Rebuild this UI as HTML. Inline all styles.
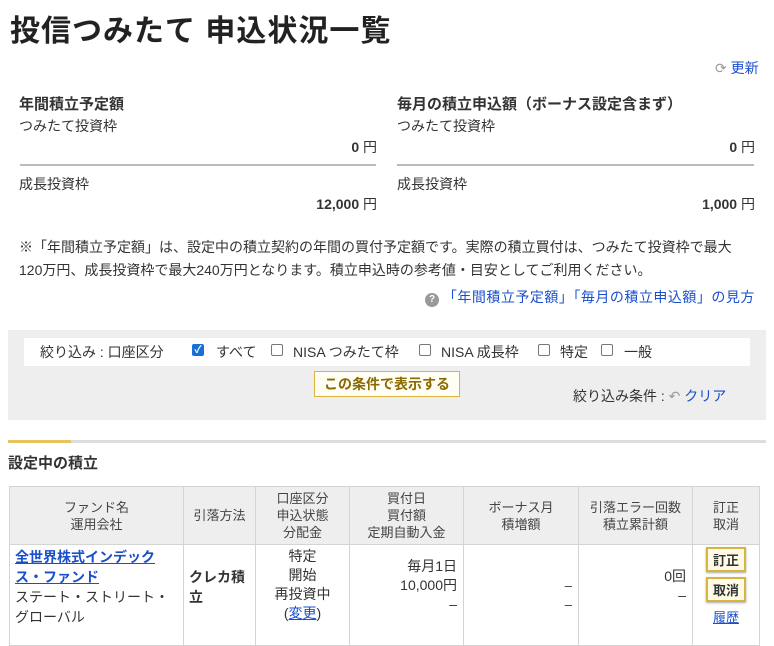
<!DOCTYPE html>
<html><head><meta charset="utf-8"><style>
*{box-sizing:border-box;margin:0;padding:0}
body{width:774px;height:631px;overflow:hidden;background:#fff;font-family:"Liberation Sans","Noto Sans CJK JP",sans-serif;color:#333;font-size:14px;position:relative}
.a{position:absolute;white-space:nowrap}
a,.lk{color:#1a4fcc}
.b{font-weight:bold}
.hr{position:absolute;height:2px;background:#bbb}
table{position:absolute;left:9px;top:486px;border-collapse:collapse;font-size:13px}
td,th{border:1px solid #d4d4d4;vertical-align:top}
th{background:#eee;font-weight:normal;vertical-align:middle;text-align:center;line-height:17px;color:#444}
.btn{display:inline-block;border:2px solid #d9b540;background:#fffbe6;color:#333;font-weight:bold;padding:1px 5px;font-size:13px;box-shadow:0 1px 2px #aaa;margin-bottom:5px}
.cb{position:absolute;top:344px;width:12px;height:12px;border:1px solid #777;border-radius:2px;background:#fff}
.cb.on{background:#1a6fd6;border-color:#1a6fd6;color:#fff;font-size:10px;line-height:11px;text-align:center;font-weight:bold}
</style></head><body>
<div class="a b" style="left:10px;top:6px;font-size:30px;letter-spacing:1px;color:#222">投信つみたて 申込状況一覧</div>
<div class="a" style="left:715px;top:58px;font-size:14px"><span style="color:#999">⟳</span> <span class="lk">更新</span></div>

<div class="a b" style="left:19px;top:93px;font-size:15px">年間積立予定額</div>
<div class="a" style="left:19px;top:116px">つみたて投資枠</div>
<div class="a" style="right:397px;top:137px;font-size:14px"><b>0</b> 円</div>
<div class="hr" style="left:20px;width:356px;top:164px"></div>
<div class="a" style="left:19px;top:174px">成長投資枠</div>
<div class="a" style="right:397px;top:194px"><b>12,000</b> 円</div>

<div class="a b" style="left:397px;top:93px;font-size:15px">毎月の積立申込額（ボーナス設定含まず）</div>
<div class="a" style="left:397px;top:116px">つみたて投資枠</div>
<div class="a" style="right:19px;top:137px"><b>0</b> 円</div>
<div class="hr" style="left:397px;width:357px;top:164px"></div>
<div class="a" style="left:397px;top:174px">成長投資枠</div>
<div class="a" style="right:19px;top:194px"><b>1,000</b> 円</div>

<div class="a" style="left:19px;top:236px;line-height:23px">※「年間積立予定額」は、設定中の積立契約の年間の買付予定額です。実際の積立買付は、つみたて投資枠で最大<br>120万円、成長投資枠で最大240万円となります。積立申込時の参考値・目安としてご利用ください。</div>
<div class="a" style="left:425px;top:287px"><span style="display:inline-block;width:14px;height:14px;border-radius:50%;background:#999;color:#fff;font-size:10px;text-align:center;line-height:14px;font-weight:bold">?</span> <span class="lk" style="letter-spacing:0.5px">「年間積立予定額」「毎月の積立申込額」の見方</span></div>

<div class="a" style="left:8px;top:330px;width:758px;height:90px;background:#eee"></div>
<div class="a" style="left:24px;top:338px;width:726px;height:28px;background:#fff"></div>
<div class="a" style="left:40px;top:342px">絞り込み : 口座区分</div>
<div class="cb on" style="left:192px">✓</div><div class="a" style="left:216px;top:342px">すべて</div>
<div class="cb" style="left:271px"></div><div class="a" style="left:293px;top:342px">NISA つみたて枠</div>
<div class="cb" style="left:419px"></div><div class="a" style="left:441px;top:342px">NISA 成長枠</div>
<div class="cb" style="left:538px"></div><div class="a" style="left:560px;top:342px">特定</div>
<div class="cb" style="left:601px"></div><div class="a" style="left:624px;top:342px">一般</div>
<div class="a b" style="left:314px;top:371px;width:146px;height:26px;border:1px solid #d9b540;background:#fffef5;color:#8a6a00;text-align:center;line-height:24px;font-size:14px">この条件で表示する</div>
<div class="a" style="left:573px;top:386px">絞り込み条件 : <span style="color:#999">↶</span> <span class="lk">クリア</span></div>

<div class="a" style="left:8px;top:440px;width:758px;height:3px;background:#ddd"></div>
<div class="a" style="left:8px;top:440px;width:63px;height:3px;background:#e6c35c"></div>
<div class="a b" style="left:8px;top:452px;font-size:15px">設定中の積立</div>

<table>
<tr style="height:58px"><th style="width:174px">ファンド名<br>運用会社</th><th style="width:72px">引落方法</th><th style="width:94px">口座区分<br>申込状態<br>分配金</th><th style="width:114px">買付日<br>買付額<br>定期自動入金</th><th style="width:115px">ボーナス月<br>積増額</th><th style="width:114px">引落エラー回数<br>積立累計額</th><th style="width:67px">訂正<br>取消</th></tr>
<tr style="height:90px">
<td style="padding:2px 5px 4px 5px;line-height:20px;font-size:14px;white-space:nowrap"><a class="b" href="#" style="color:#1a4fcc">全世界株式インデック<br>ス・ファンド</a><br>ステート・ストリート・<br>グローバル</td>
<td class="b" style="padding:22px 5px;line-height:20px;font-size:14px">クレカ積<br>立</td>
<td style="text-align:center;padding:2px;line-height:19px;font-size:14px">特定<br>開始<br>再投資中<br>(<a href="#">変更</a>)</td>
<td style="text-align:right;padding:12px 6px;line-height:19px;font-size:14px">毎月1日<br>10,000円<br>–</td>
<td style="text-align:right;padding:31px 6px;line-height:19px">–<br>–</td>
<td style="text-align:right;padding:22px 6px;line-height:19px;font-size:14px">0回<br>–</td>
<td style="text-align:center;padding:2px 0"><span class="btn">訂正</span><br><span class="btn">取消</span><br><a href="#" style="font-size:13px">履歴</a></td>
</tr></table>
</body></html>
